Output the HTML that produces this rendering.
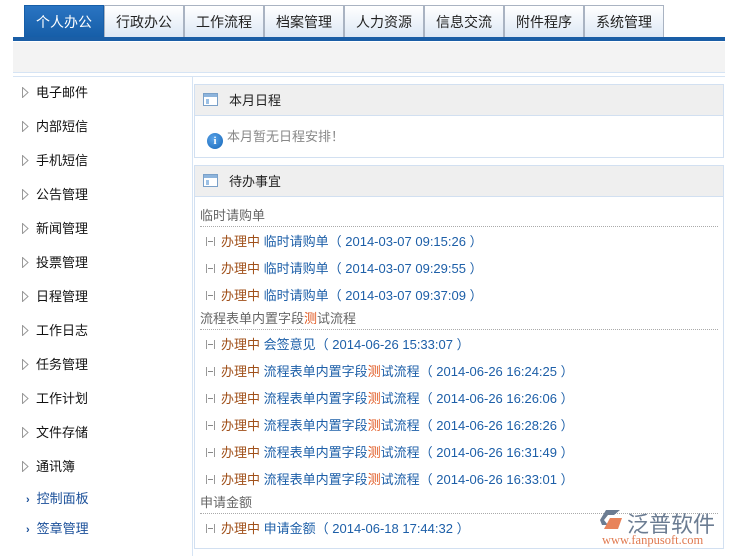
<!DOCTYPE html>
<html><head><meta charset="utf-8"><style>
*{margin:0;padding:0;box-sizing:border-box}
body{width:730px;height:556px;background:#fff;position:relative;overflow:hidden;font-family:"Liberation Sans","Noto Sans CJK SC","WenQuanYi Zen Hei",sans-serif;font-size:13px;color:#222}
.tab{position:absolute;top:5px;height:32px;width:80px;border:1px solid #a9b3c2;border-bottom:none;background:linear-gradient(#fff,#dde8f5);text-align:center;line-height:33px;font-size:14px;color:#222}
.tab.a{background:linear-gradient(#2a74c2,#165ea8);color:#fff;border-color:#165ea8}
.bar{position:absolute;left:13px;top:37px;width:712px;height:4px;background:#1a5ea6}
.gray{position:absolute;left:13px;top:42px;width:712px;height:31px;background:#f3f3f3;border-bottom:1px solid #d6e4f4}
.l2{position:absolute;left:13px;top:76px;width:712px;height:1px;background:#d6e4f4}
.vl{position:absolute;left:192px;top:76px;width:1px;height:480px;background:#d6e4f4}
.side{position:absolute;left:22px;font-size:13px;color:#111}
.side svg{margin-right:7px;vertical-align:-1px}
.side.b{color:#1a4f99}
.side.b .t{color:#1a4f99;font-size:11px;font-weight:bold;margin-right:7px;margin-left:4px}
.panel{position:absolute;left:194px;width:530px;border:1px solid #d2e0f1}
.ph{height:31px;background:#efefef;border-bottom:1px solid #d2e0f1;line-height:31px;padding-left:34px;font-size:13px;position:relative}
.ic{position:absolute;left:8px;top:8px;width:15px;height:13px;border:1px solid #7aa0c8;background:#fff}
.ic:before{content:"";position:absolute;left:0;top:0;right:0;height:3px;background:#8db4dc}
.ic:after{content:"";position:absolute;left:2px;top:5px;width:3px;height:5px;background:#9cc0e4}
.r{position:absolute;left:200px;font-size:13px;white-space:nowrap}
.cat{color:#666}
.dl{position:absolute;left:200px;width:518px;border-top:1px dotted #aaa}
.it .m{display:inline-block;width:9px;height:9px;border:1px solid #999;margin:0 6px 0 6px;position:relative;border-top:none;border-bottom:none}
.it .m:after{content:"";position:absolute;left:1px;top:4px;width:5px;height:1px;background:#888}
.s{color:#a0501a}.k{color:#1d5fa8}.x{color:#e0561e}
</style></head><body>
<div class="tab a" style="left:24px">个人办公</div>
<div class="tab" style="left:104px">行政办公</div>
<div class="tab" style="left:184px">工作流程</div>
<div class="tab" style="left:264px">档案管理</div>
<div class="tab" style="left:344px">人力资源</div>
<div class="tab" style="left:424px">信息交流</div>
<div class="tab" style="left:504px">附件程序</div>
<div class="tab" style="left:584px">系统管理</div>
<div class="bar"></div><div class="gray"></div><div class="l2"></div><div class="vl"></div>

<div class="side" style="top:82px"><svg width="7" height="11"><path d="M0.5 0.5 L6 5.5 L0.5 10.5 Z" fill="#fff" stroke="#999"/></svg>电子邮件</div>
<div class="side" style="top:116px"><svg width="7" height="11"><path d="M0.5 0.5 L6 5.5 L0.5 10.5 Z" fill="#fff" stroke="#999"/></svg>内部短信</div>
<div class="side" style="top:150px"><svg width="7" height="11"><path d="M0.5 0.5 L6 5.5 L0.5 10.5 Z" fill="#fff" stroke="#999"/></svg>手机短信</div>
<div class="side" style="top:184px"><svg width="7" height="11"><path d="M0.5 0.5 L6 5.5 L0.5 10.5 Z" fill="#fff" stroke="#999"/></svg>公告管理</div>
<div class="side" style="top:218px"><svg width="7" height="11"><path d="M0.5 0.5 L6 5.5 L0.5 10.5 Z" fill="#fff" stroke="#999"/></svg>新闻管理</div>
<div class="side" style="top:252px"><svg width="7" height="11"><path d="M0.5 0.5 L6 5.5 L0.5 10.5 Z" fill="#fff" stroke="#999"/></svg>投票管理</div>
<div class="side" style="top:286px"><svg width="7" height="11"><path d="M0.5 0.5 L6 5.5 L0.5 10.5 Z" fill="#fff" stroke="#999"/></svg>日程管理</div>
<div class="side" style="top:320px"><svg width="7" height="11"><path d="M0.5 0.5 L6 5.5 L0.5 10.5 Z" fill="#fff" stroke="#999"/></svg>工作日志</div>
<div class="side" style="top:354px"><svg width="7" height="11"><path d="M0.5 0.5 L6 5.5 L0.5 10.5 Z" fill="#fff" stroke="#999"/></svg>任务管理</div>
<div class="side" style="top:388px"><svg width="7" height="11"><path d="M0.5 0.5 L6 5.5 L0.5 10.5 Z" fill="#fff" stroke="#999"/></svg>工作计划</div>
<div class="side" style="top:422px"><svg width="7" height="11"><path d="M0.5 0.5 L6 5.5 L0.5 10.5 Z" fill="#fff" stroke="#999"/></svg>文件存储</div>
<div class="side" style="top:456px"><svg width="7" height="11"><path d="M0.5 0.5 L6 5.5 L0.5 10.5 Z" fill="#fff" stroke="#999"/></svg>通讯簿</div>
<div class="side b" style="top:488px"><span class="t">›</span>控制面板</div>
<div class="side b" style="top:518px"><span class="t">›</span>签章管理</div>

<div class="panel" style="top:84px;height:74px">
<div class="ph"><span class="ic"></span>本月日程</div>
<div style="padding:10px 0 0 12px;color:#888;font-size:13px"><span style="display:inline-block;width:16px;height:16px;border-radius:50%;background:radial-gradient(circle at 40% 35%,#5aa3e8,#1466b8);color:#fff;font:bold 11px 'Liberation Serif',serif;text-align:center;line-height:16px;vertical-align:-3px;margin-right:4px">i</span>本月暂无日程安排！</div>
</div>
<div class="panel" style="top:165px;height:384px">
<div class="ph"><span class="ic"></span>待办事宜</div>
</div>

<div class="r cat" style="top:205px">临时请购单</div><div class="dl" style="top:226px"></div>
<div class="r it" style="top:231px"><span class="m"></span><span class="s">办理中</span> <span class="k">临时请购单（ 2014-03-07 09:15:26 ）</span></div>
<div class="r it" style="top:258px"><span class="m"></span><span class="s">办理中</span> <span class="k">临时请购单（ 2014-03-07 09:29:55 ）</span></div>
<div class="r it" style="top:285px"><span class="m"></span><span class="s">办理中</span> <span class="k">临时请购单（ 2014-03-07 09:37:09 ）</span></div>
<div class="r cat" style="top:308px">流程表单内置字段<span class="x">测</span>试流程</div><div class="dl" style="top:329px"></div>
<div class="r it" style="top:334px"><span class="m"></span><span class="s">办理中</span> <span class="k">会签意见（ 2014-06-26 15:33:07 ）</span></div>
<div class="r it" style="top:361px"><span class="m"></span><span class="s">办理中</span> <span class="k">流程表单内置字段<span class="x">测</span>试流程（ 2014-06-26 16:24:25 ）</span></div>
<div class="r it" style="top:388px"><span class="m"></span><span class="s">办理中</span> <span class="k">流程表单内置字段<span class="x">测</span>试流程（ 2014-06-26 16:26:06 ）</span></div>
<div class="r it" style="top:415px"><span class="m"></span><span class="s">办理中</span> <span class="k">流程表单内置字段<span class="x">测</span>试流程（ 2014-06-26 16:28:26 ）</span></div>
<div class="r it" style="top:442px"><span class="m"></span><span class="s">办理中</span> <span class="k">流程表单内置字段<span class="x">测</span>试流程（ 2014-06-26 16:31:49 ）</span></div>
<div class="r it" style="top:469px"><span class="m"></span><span class="s">办理中</span> <span class="k">流程表单内置字段<span class="x">测</span>试流程（ 2014-06-26 16:33:01 ）</span></div>
<div class="r cat" style="top:492px">申请金额</div><div class="dl" style="top:513px"></div>
<div class="r it" style="top:518px"><span class="m"></span><span class="s">办理中</span> <span class="k">申请金额（ 2014-06-18 17:44:32 ）</span></div>

<div style="position:absolute;left:600px;top:509px;width:24px;height:22px">
<svg width="24" height="22" viewBox="0 0 24 22"><path d="M6 1 L20 1 L14 6 L8 6 L4 11 L8 16 L2 16 L0 11 Z" fill="#6b7c92"/><path d="M10 9 L22 9 L18 20 L4 20 Z" fill="#e8835a"/></svg></div>
<div style="position:absolute;left:627px;top:507px;font-size:22px;color:#6b7c92">泛普软件</div>
<div style="position:absolute;left:602px;top:533px;font:12.5px 'Liberation Serif',serif;color:#e07a50">www.fanpusoft.com</div>
</body></html>
